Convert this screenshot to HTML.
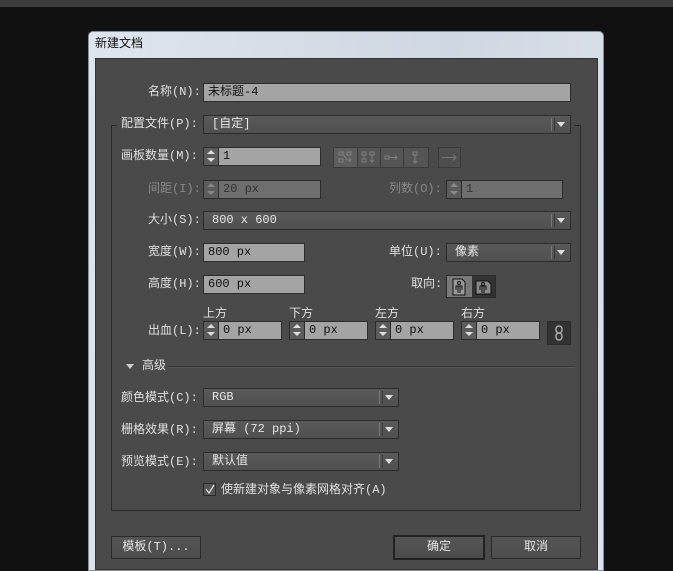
<!DOCTYPE html>
<html><head><meta charset="utf-8"><style>
*{margin:0;padding:0;box-sizing:border-box}
body{width:673px;height:569px;background:#111;position:relative;overflow:hidden;font-family:"Liberation Mono","Noto Sans CJK SC",monospace;font-size:12px;color:#ddd}
.a{position:absolute}
.lbl{position:absolute;line-height:18px;color:#e0e0e0;white-space:nowrap}
.dis{color:#8a8a8a}
.inp{position:absolute;height:19px;background:#a4a4a4;border:1px solid #2c2c2c;color:#111;line-height:17px;padding-left:4px}
.inp.d{background:#6e6e6e;color:#333}
.dd{position:absolute;height:19px;background:linear-gradient(#5a5a5a,#505050);border:1px solid #2c2c2c;color:#e6e6e6;line-height:17px;padding-left:8px}
.dd:after{content:"";position:absolute;right:5px;top:6px;border-left:4px solid transparent;border-right:4px solid transparent;border-top:5px solid #ddd}
.dd:before{content:"";position:absolute;right:15px;top:2px;width:2px;height:13px;border-left:1px solid #777;border-right:1px solid #3a3a3a}
.sp{position:absolute;height:19px;border:1px solid #2c2c2c;background:#a4a4a4;color:#111;line-height:17px;padding-left:19px}
.sp.d{background:#6e6e6e;color:#333}
.sp i{position:absolute;left:0;top:0;width:15px;height:17px;background:#5c5c5c;border-right:1px solid #2c2c2c}
.sp i:before{content:"";position:absolute;left:3px;top:2px;border-left:4px solid transparent;border-right:4px solid transparent;border-bottom:4px solid #ddd}
.sp i:after{content:"";position:absolute;left:3px;top:10px;border-left:4px solid transparent;border-right:4px solid transparent;border-top:4px solid #ddd}
.sp.d i:before{border-bottom-color:#888}.sp.d i:after{border-top-color:#888}
.btn{position:absolute;height:23px;background:linear-gradient(#555,#4c4c4c);border:1px solid #2a2a2a;color:#e6e6e6;text-align:center;line-height:21px}
</style></head><body>
<div class="a" style="left:0;top:0;width:673px;height:7px;background:#3c3c3c"></div>
<div class="a" style="left:88px;top:31px;width:516px;height:540px;background:linear-gradient(100deg,#dfe5ee,#cfd7e2 60%,#dce3ec);border:1px solid #8a9099;border-radius:5px 5px 0 0"></div>
<div class="lbl" style="left:95px;top:35px;color:#111">新建文档</div>
<div class="a" style="left:95px;top:58px;width:503px;height:512px;background:#4a4a4a;border:1px solid #333"></div>
<!-- group box -->
<div class="a" style="left:111px;top:125px;width:470px;height:386px;border:1px solid #2a2a2a;border-top:none"></div>
<div class="a" style="left:111px;top:125px;width:6px;border-top:1px solid #2a2a2a"></div>
<div class="a" style="left:574px;top:125px;width:7px;border-top:1px solid #2a2a2a"></div>

<div class="lbl" style="left:148px;top:83px">名称(N):</div>
<div class="inp" style="left:203px;top:83px;width:368px">未标题-4</div>
<div class="lbl" style="left:121px;top:115px;background:#4a4a4a">配置文件(P):</div>
<div class="dd" style="left:203px;top:115px;width:368px">[自定]</div>

<div class="lbl" style="left:121px;top:147px">画板数量(M):</div>
<div class="sp" style="left:203px;top:147px;width:118px"><i></i>1</div>
<div class="a" style="left:333px;top:147px;width:96px;height:21px;border:1px solid #3a3a3a;background:#555">
<div class="a" style="left:23px;top:0;width:1px;height:19px;background:#3a3a3a"></div>
<div class="a" style="left:46px;top:0;width:1px;height:19px;background:#3a3a3a"></div>
<div class="a" style="left:69px;top:0;width:1px;height:19px;background:#3a3a3a"></div>
<div class="a" style="left:0;top:0;width:23px;height:19px;background:#5e5e5e"></div>
<svg class="a" style="left:0;top:0" width="94" height="19" fill="none" stroke="#808080"><path d="M5 4h4v3H5zM13 4h4v3h-4zM5 11h4v3H5zM9 6l4 6M12 12h5m-2-2l2 2-2 2M28 4h4v3h-4zM36 4h4v3h-4zM28 11h4v3h-4zM38 7v7m-2-2l2 2 2-2M30 7v4M51 8h4v3h-4zM55 9.5h8m-2-2l2 2-2 2M79 4h4v3h-4zM81 7v8m-2-2l2 2 2-2"/></svg>
</div>
<div class="a" style="left:438px;top:147px;width:23px;height:21px;border:1px solid #3a3a3a;background:#4e4e4e"><svg class="a" style="left:0;top:0" width="21" height="19" fill="none" stroke="#777"><path d="M3 9.5h14m-3-3l3 3-3 3"/></svg></div>

<div class="lbl dis" style="left:148px;top:180px">间距(I):</div>
<div class="sp d" style="left:203px;top:180px;width:118px"><i></i>20 px</div>
<div class="lbl dis" style="left:389px;top:180px">列数(O):</div>
<div class="sp d" style="left:446px;top:180px;width:117px"><i></i>1</div>

<div class="lbl" style="left:148px;top:211px">大小(S):</div>
<div class="dd" style="left:203px;top:211px;width:368px">800 x 600</div>
<div class="lbl" style="left:148px;top:243px">宽度(W):</div>
<div class="inp" style="left:203px;top:243px;width:102px">800 px</div>
<div class="lbl" style="left:389px;top:243px">单位(U):</div>
<div class="dd" style="left:446px;top:243px;width:125px">像素</div>
<div class="lbl" style="left:148px;top:275px">高度(H):</div>
<div class="inp" style="left:203px;top:275px;width:102px">600 px</div>
<div class="lbl" style="left:411px;top:275px">取向:</div>
<div class="a" style="left:446px;top:275px;width:50px;height:23px;border:1px solid #2a2a2a;background:#333">
<div class="a" style="left:0;top:0;width:25px;height:21px;background:#7a7a7a"></div>
<svg class="a" style="left:0;top:0" width="48" height="21" fill="none" stroke="#111"><path d="M6 3h9l3 3v13H6z" fill="#9a9a9a"/><circle cx="12" cy="7" r="1.5"/><path d="M9 14v-4h6v4M11 10v7M13 10v7"/><path d="M29 5h12l3 3v10H29z" fill="#8a8a8a"/><circle cx="36" cy="8" r="1.5"/><path d="M33 14v-4h6v4M35 10v7M37 10v7"/></svg>
</div>

<div class="lbl" style="left:203px;top:305px">上方</div>
<div class="lbl" style="left:289px;top:305px">下方</div>
<div class="lbl" style="left:375px;top:305px">左方</div>
<div class="lbl" style="left:461px;top:305px">右方</div>
<div class="lbl" style="left:148px;top:322px">出血(L):</div>
<div class="sp" style="left:203px;top:321px;width:79px"><i></i>0 px</div>
<div class="sp" style="left:289px;top:321px;width:79px"><i></i>0 px</div>
<div class="sp" style="left:375px;top:321px;width:79px"><i></i>0 px</div>
<div class="sp" style="left:461px;top:321px;width:79px"><i></i>0 px</div>
<div class="a" style="left:547px;top:321px;width:24px;height:24px;background:#333;border:1px solid #2a2a2a"><svg width="22" height="22" fill="none" stroke="#aaa" stroke-width="1.5"><rect x="8" y="4" width="6" height="7" rx="3"/><rect x="8" y="11" width="6" height="7" rx="3"/></svg></div>

<div class="a" style="left:126px;top:364px;border-left:4px solid transparent;border-right:4px solid transparent;border-top:5px solid #ccc"></div>
<div class="lbl" style="left:142px;top:357px">高级</div>
<div class="a" style="left:168px;top:366px;width:407px;height:2px;border-top:1px solid #353535;border-bottom:1px solid #575757"></div>

<div class="lbl" style="left:121px;top:389px">颜色模式(C):</div>
<div class="dd" style="left:203px;top:388px;width:196px">RGB</div>
<div class="lbl" style="left:121px;top:421px">栅格效果(R):</div>
<div class="dd" style="left:203px;top:420px;width:196px">屏幕 (72 ppi)</div>
<div class="lbl" style="left:121px;top:453px">预览模式(E):</div>
<div class="dd" style="left:203px;top:452px;width:196px">默认值</div>
<div class="a" style="left:203px;top:483px;width:13px;height:13px;background:#555;border:1px solid #2a2a2a"><svg class="a" style="left:0;top:0" width="11" height="11" fill="none" stroke="#ddd" stroke-width="1.3"><path d="M2 5l3 4 5-8"/></svg></div>
<div class="lbl" style="left:221px;top:481px">使新建对象与像素网格对齐(A)</div>

<div class="btn" style="left:111px;top:536px;width:90px">模板(T)...</div>
<div class="btn" style="left:393px;top:535px;width:92px;height:25px;border:2px solid #222">确定</div>
<div class="btn" style="left:491px;top:536px;width:90px">取消</div>
</body></html>
